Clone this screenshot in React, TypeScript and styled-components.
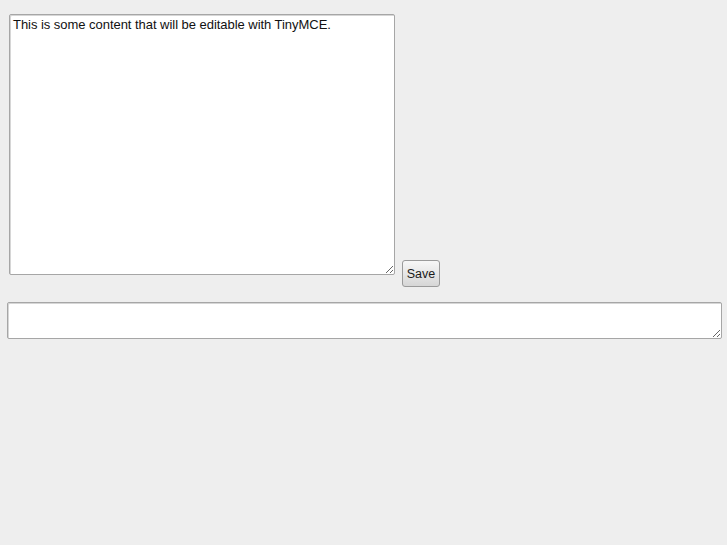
import React from "react";
import styled, { createGlobalStyle } from "styled-components";

const Global = createGlobalStyle`
  html, body { margin: 0; padding: 0; background: #eeeeee; }
  body { font-family: "Liberation Sans", Arial, sans-serif; }
`;

const Page = styled.div`
  display: flex;
  flex-direction: column;
  padding-top: 14px;
`;

const EditorRow = styled.div`
  display: flex;
  align-items: flex-end;
  gap: 7px;
  padding-left: 9px;
`;

const Editor = styled.textarea`
  box-sizing: border-box;
  width: 386px;
  height: 261px;
  margin: 0 0 12px 0;
  padding: 2px 3px;
  background: #ffffff;
  border: 1px solid #a6a6a6;
  box-shadow: inset 1px 1px 0 #d6d6d6;
  border-radius: 2px;
  font-family: "Liberation Sans", Arial, sans-serif;
  font-size: 13px;
  letter-spacing: -0.04px;
  line-height: 15px;
  color: #111;
  resize: both;
  outline: none;
`;

const SaveButton = styled.button`
  box-sizing: border-box;
  width: 38px;
  height: 27px;
  margin: 0;
  padding: 0;
  border: 1px solid #9a9a9a;
  border-radius: 3px;
  background: linear-gradient(#f7f7f7, #d6d6d6);
  font-family: "Liberation Sans", Arial, sans-serif;
  font-size: 12.5px;
  color: #1a1a1a;
  cursor: pointer;
`;

const Notes = styled.textarea`
  box-sizing: border-box;
  width: 715px;
  height: 37px;
  margin: 15px 0 0 7px;
  padding: 2px 3px;
  background: #ffffff;
  border: 1px solid #a6a6a6;
  box-shadow: inset 1px 1px 0 #d6d6d6;
  border-radius: 2px;
  font-family: "Liberation Sans", Arial, sans-serif;
  font-size: 13px;
  resize: both;
  outline: none;
`;

export default function App() {
  return (
    <>
      <Global />
      <Page>
        <EditorRow>
          <Editor defaultValue="This is some content that will be editable with TinyMCE." />
          <SaveButton>Save</SaveButton>
        </EditorRow>
        <Notes />
      </Page>
    </>
  );
}
